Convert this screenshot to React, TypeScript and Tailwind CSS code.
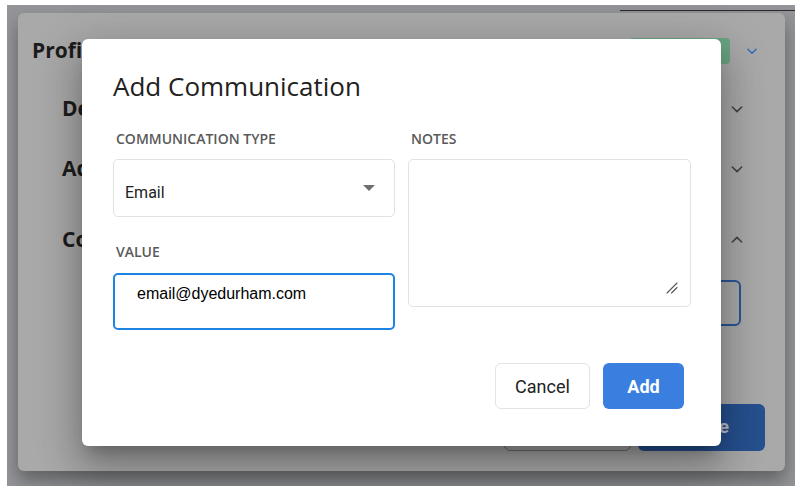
function Chevron({ up = false, className = '' }: { up?: boolean; className?: string }) {
  return (
    <svg viewBox="0 0 24 24" className={className} fill="none" stroke="currentColor" strokeWidth={2.4} strokeLinecap="round" strokeLinejoin="round">
      <path d={up ? 'M5 15l7-7 7 7' : 'M5 9l7 7 7-7'} />
    </svg>
  )
}

function SectionRow({ title, up = false, className = '' }: { title: string; up?: boolean; className?: string }) {
  return (
    <div className={`flex items-center justify-between h-[40px] pl-[44px] pr-[40px] ${className}`}>
      <span className="text-[21px] font-bold text-[#1c1c1c]">{title}</span>
      <Chevron up={up} className="w-[16px] h-[16px] text-[#444]" />
    </div>
  )
}

function ProfileCard() {
  return (
    <div className="w-[767px] h-[458px] bg-[#a9a9a9] rounded-md shadow-[0_10px_18px_rgba(0,0,0,0.35)] pt-[25px]">
      <div className="flex items-center h-[26px] pl-[14px] pr-[26px]">
        <span className="flex-1 text-[21px] font-bold text-[#1c1c1c]">Profile</span>
        <div className="w-[101px] h-[26px] rounded bg-[#6aa583]" />
        <Chevron className="ml-[15px] w-[14px] h-[14px] text-[#2d69c0]" />
      </div>
      <SectionRow title="Details" className="mt-[25px]" />
      <SectionRow title="Addresses" className="mt-[20px]" />
      <SectionRow title="Communications" up className="mt-[31px]" />
      <div className="flex justify-end pr-[44px] mt-[20px]">
        <div className="w-[150px] h-[46px] rounded-md border-2 border-[#2b5597]" />
      </div>
      <div className="flex justify-end gap-[7px] pr-[20px] mt-[78px]">
        <div className="w-[127px] h-[47px] rounded-md border border-[#6f6f6f]" />
        <div className="w-[127px] h-[47px] rounded-md bg-[#26508f] flex items-center justify-end pr-[36px] text-[19px] font-bold text-[#b7bfcc] font-['Roboto',sans-serif]">
          Save
        </div>
      </div>
    </div>
  )
}

function Label({ children, className = '' }: { children: string; className?: string }) {
  return <div className={`pl-[3px] text-[14px] leading-[18px] font-semibold text-[#5a5a5a] ${className}`}>{children}</div>
}

function Modal() {
  return (
    <div className="absolute left-[75px] top-[34px] w-[639px] h-[407px] bg-white rounded-[6px] pl-[31px] pr-[30px] pt-[29px] shadow-[0_11px_15px_-7px_rgba(0,0,0,0.25),0_24px_38px_3px_rgba(0,0,0,0.18),0_9px_46px_8px_rgba(0,0,0,0.14)]">
      <h2 className="text-[26px] leading-[36px] font-medium text-[#212121]">Add Communication</h2>
      <div className="grid grid-cols-[282px_283px] gap-x-[13px] mt-[26px]">
        <div>
          <Label>COMMUNICATION TYPE</Label>
          <div className="relative mt-[11px] h-[58px] rounded-[5px] border border-[#e2e2e2] pl-[11px] pt-[23px] font-['Roboto',sans-serif] text-[16px] leading-[19px] text-[#222]">
            Email
            <span className="absolute right-[19px] top-[25px] w-0 h-0 border-l-[6px] border-r-[6px] border-t-[6px] border-l-transparent border-r-transparent border-t-[#6f6f6f]" />
          </div>
          <Label className="mt-[26px]">VALUE</Label>
          <div className="mt-[12px] h-[57px] rounded-[5px] border-2 border-[#1e84e3] pl-[22px] pt-[10px] font-['Liberation_Sans',Arial,sans-serif] text-[16px] leading-[18px] text-black">
            email@dyedurham.com
          </div>
        </div>
        <div>
          <Label>NOTES</Label>
          <div className="relative mt-[11px]">
            <textarea
              className="block w-full h-[148px] rounded-[5px] border border-[#e2e2e2] outline-none resize-none"
              defaultValue=""
            />
            <svg viewBox="0 0 12 12" className="absolute right-[13px] bottom-[13px] w-[12px] h-[12px] text-[#555]" fill="none" stroke="currentColor" strokeWidth={1.1} strokeLinecap="round">
              <path d="M1 11L11 1M5.5 11L11 5.5" />
            </svg>
          </div>
        </div>
      </div>
      <div className="flex justify-end gap-[13px] pr-[7px] mt-[33px] font-['Roboto',sans-serif]">
        <button type="button" className="w-[95px] h-[46px] rounded-md border border-[#e3e3e3] bg-white text-[18px] text-[#222]">
          Cancel
        </button>
        <button type="button" className="w-[81px] h-[46px] rounded-md bg-[#3a7fe0] text-[18px] font-bold text-white">
          Add
        </button>
      </div>
    </div>
  )
}

export default function App() {
  return (
    <div className="w-[802px] h-[493px] bg-white pt-[5px] pl-[7px] font-['Open_Sans',sans-serif]">
      <div className="relative w-[788px] h-[481px] bg-[#939598] pt-[8px] pl-[11px] overflow-hidden">
        <div className="absolute left-[613px] top-[5px] w-[175px] h-px bg-[#2a2a2a]" />
        <ProfileCard />
        <Modal />
      </div>
    </div>
  )
}
